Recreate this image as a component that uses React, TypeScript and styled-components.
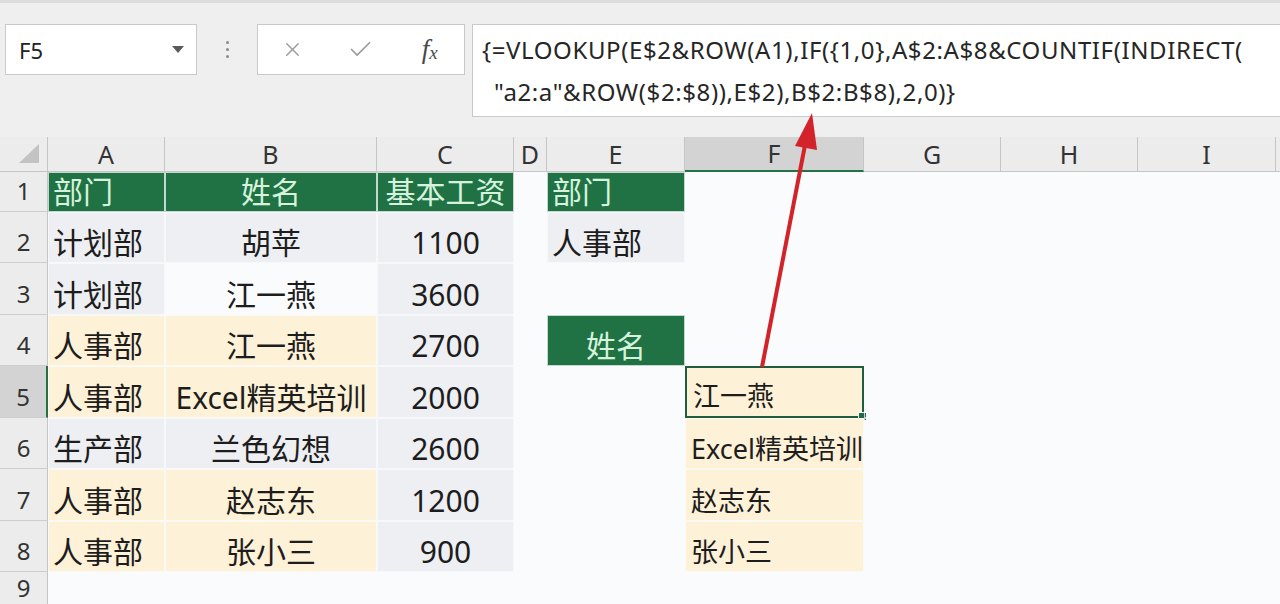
import React from 'react';
import styled, { createGlobalStyle } from 'styled-components';
import { X, Check } from 'lucide-react';

type Fill = 'green' | 'gray' | 'yellow' | 'none';

interface ICell {
  t: string;
  fill?: Fill;
  center?: boolean;
  small?: boolean;
  selected?: boolean;
}

interface IRow {
  n: number;
  cells: Record<string, ICell>;
}

const COLUMNS: { key: string; width: number }[] = [
  { key: 'A', width: 117 },
  { key: 'B', width: 212 },
  { key: 'C', width: 137 },
  { key: 'D', width: 33 },
  { key: 'E', width: 138 },
  { key: 'F', width: 179 },
  { key: 'G', width: 137 },
  { key: 'H', width: 137 },
  { key: 'I', width: 138 },
  { key: '', width: 60 },
];

const ROWS: IRow[] = [
  {
    n: 1,
    cells: {
      A: { t: '部门', fill: 'green' },
      B: { t: '姓名', fill: 'green', center: true },
      C: { t: '基本工资', fill: 'green', center: true },
      E: { t: '部门', fill: 'green' },
    },
  },
  {
    n: 2,
    cells: {
      A: { t: '计划部', fill: 'gray' },
      B: { t: '胡苹', fill: 'gray', center: true },
      C: { t: '1100', fill: 'gray', center: true },
      E: { t: '人事部', fill: 'gray' },
    },
  },
  {
    n: 3,
    cells: {
      A: { t: '计划部', fill: 'gray' },
      B: { t: '江一燕', center: true },
      C: { t: '3600', fill: 'gray', center: true },
    },
  },
  {
    n: 4,
    cells: {
      A: { t: '人事部', fill: 'yellow' },
      B: { t: '江一燕', fill: 'yellow', center: true },
      C: { t: '2700', fill: 'gray', center: true },
      E: { t: '姓名', fill: 'green', center: true },
    },
  },
  {
    n: 5,
    cells: {
      A: { t: '人事部', fill: 'yellow' },
      B: { t: 'Excel精英培训', fill: 'yellow', center: true },
      C: { t: '2000', fill: 'gray', center: true },
      F: { t: '江一燕', fill: 'yellow', small: true, selected: true },
    },
  },
  {
    n: 6,
    cells: {
      A: { t: '生产部', fill: 'gray' },
      B: { t: '兰色幻想', fill: 'gray', center: true },
      C: { t: '2600', fill: 'gray', center: true },
      F: { t: 'Excel精英培训', fill: 'yellow', small: true },
    },
  },
  {
    n: 7,
    cells: {
      A: { t: '人事部', fill: 'yellow' },
      B: { t: '赵志东', fill: 'yellow', center: true },
      C: { t: '1200', fill: 'gray', center: true },
      F: { t: '赵志东', fill: 'yellow', small: true },
    },
  },
  {
    n: 8,
    cells: {
      A: { t: '人事部', fill: 'yellow' },
      B: { t: '张小三', fill: 'yellow', center: true },
      C: { t: '900', fill: 'gray', center: true },
      F: { t: '张小三', fill: 'yellow', small: true },
    },
  },
  { n: 9, cells: {} },
];

const FILLS: Record<Fill, string> = {
  green: '#207245',
  gray: '#edeff2',
  yellow: '#fdf1d7',
  none: 'transparent',
};

const App = () => {
  return (
    <>
      <GlobalStyle />
      <Page>
        <Toolbar>
          <NameBox>
            F5
            <DropArrow viewBox="0 0 12 8">
              <polygon points="0,0 12,0 6,7" />
            </DropArrow>
          </NameBox>
          <Separator>
            <span />
            <span />
            <span />
          </Separator>
          <FuncBox>
            <FuncButton>
              <X size={23} strokeWidth={1.5} />
            </FuncButton>
            <FuncButton>
              <Check size={27} strokeWidth={1.5} />
            </FuncButton>
            <FuncButton>
              <Fx>
                f<sub>x</sub>
              </Fx>
            </FuncButton>
          </FuncBox>
          <FormulaBox>
            <FormulaLine>{'{=VLOOKUP(E$2&ROW(A1),IF({1,0},A$2:A$8&COUNTIF(INDIRECT('}</FormulaLine>
            <FormulaLine $indent>{'"a2:a"&ROW($2:$8)),E$2),B$2:B$8),2,0)}'}</FormulaLine>
          </FormulaBox>
        </Toolbar>

        <Sheet>
          <Corner>
            <svg width="22" height="20" viewBox="0 0 22 20">
              <polygon points="20,0 20,19 0,19" fill="#c3c3c3" />
            </svg>
          </Corner>
          {COLUMNS.map((c) => (
            <ColHead key={c.key || 'J'} $active={c.key === 'F'}>
              {c.key}
            </ColHead>
          ))}

          {ROWS.map((row) => (
            <React.Fragment key={row.n}>
              <RowHead $active={row.n === 5} $last={row.n === ROWS.length}>
                {row.n}
              </RowHead>
              {COLUMNS.map((c) => {
                const cell = row.cells[c.key];
                return (
                  <Cell
                    key={c.key || 'J'}
                    $fill={cell?.fill || 'none'}
                    $center={!!cell?.center}
                    $small={!!cell?.small}
                    $selected={!!cell?.selected}
                  >
                    {cell?.t}
                  </Cell>
                );
              })}
            </React.Fragment>
          ))}
        </Sheet>

        <Arrow width="1280" height="604" viewBox="0 0 1280 604">
          <line x1="762" y1="367" x2="806" y2="140" stroke="#d3232a" strokeWidth="4" />
          <polygon points="812,113 795,146 817,150" fill="#d3232a" />
        </Arrow>
      </Page>
    </>
  );
};

export default App;

const GlobalStyle = createGlobalStyle`
  html, body {
    margin: 0;
    padding: 0;
  }
  body {
    width: 1280px;
    height: 604px;
    overflow: hidden;
    background: #fafbfc;
    font-family: "Noto Sans", "Noto Sans CJK SC", sans-serif;
    color: #1d1d1d;
  }
`;

const Page = styled.div`
  position: relative;
  width: 1280px;
  height: 604px;
  overflow: hidden;
  display: flex;
  flex-direction: column;
`;

const Toolbar = styled.div`
  height: 137px;
  box-sizing: border-box;
  flex-shrink: 0;
  display: flex;
  align-items: flex-start;
  padding: 21px 0 0 5px;
  background: #efefef;
  border-top: 3px solid #dcdcdc;
`;

const NameBox = styled.div`
  width: 192px;
  height: 51px;
  box-sizing: border-box;
  display: flex;
  align-items: center;
  justify-content: space-between;
  padding: 0 12px 0 13px;
  background: #fff;
  border: 1px solid #c9c9c9;
  font-size: 22px;
  color: #222;
`;

const DropArrow = styled.svg`
  width: 12px;
  height: 8px;
  fill: #5a5a5a;
`;

const Separator = styled.div`
  width: 60px;
  height: 51px;
  display: flex;
  flex-direction: column;
  align-items: center;
  justify-content: center;
  gap: 4px;

  span {
    width: 3px;
    height: 3px;
    border-radius: 50%;
    background: #8a8a8a;
  }
`;

const FuncBox = styled.div`
  width: 208px;
  height: 51px;
  box-sizing: border-box;
  display: grid;
  grid-template-columns: repeat(3, 1fr);
  background: #fff;
  border: 1px solid #c9c9c9;
  color: #9c9c9c;
`;

const FuncButton = styled.div`
  display: flex;
  align-items: center;
  justify-content: center;
`;

const Fx = styled.span`
  font-family: "Liberation Serif", serif;
  font-style: italic;
  font-size: 27px;
  color: #4a4a4a;
  line-height: 1;

  sub {
    font-size: 19px;
    vertical-align: -1px;
  }
`;

const FormulaBox = styled.div`
  flex: 1;
  height: 93px;
  box-sizing: border-box;
  margin-left: 7px;
  margin-right: -2px;
  padding: 4px 9px 0;
  background: #fff;
  border: 1px solid #c9c9c9;
  font-size: 24px;
  letter-spacing: 0.6px;
  line-height: 42px;
  color: #262626;
  white-space: nowrap;
`;

const FormulaLine = styled.div<{ $indent?: boolean }>`
  padding-left: ${({ $indent }) => ($indent ? '12px' : '0')};
`;

const Sheet = styled.div`
  flex: 1;
  display: grid;
  grid-template-columns: 48px ${COLUMNS.map((c) => `${c.width}px`).join(' ')};
  grid-template-rows: 35px 40px repeat(7, 51.43px) 32px;
  background: #fafbfc;
`;

const Corner = styled.div`
  display: flex;
  align-items: flex-end;
  justify-content: flex-end;
  padding: 0 6px 7px 0;
  background: #ececec;
  border-right: 1px solid #c6c6c6;
  border-bottom: 1px solid #c6c6c6;
`;

const ColHead = styled.div<{ $active: boolean }>`
  display: flex;
  align-items: flex-end;
  justify-content: center;
  padding-bottom: 1px;
  box-sizing: border-box;
  font-size: 25px;
  line-height: 32px;
  color: #333;
  background: ${({ $active }) => ($active ? '#d3d3d3' : '#ececec')};
  border-right: 1px solid #c6c6c6;
  border-bottom: ${({ $active }) => ($active ? '2px solid #217346' : '1px solid #c6c6c6')};
`;

const RowHead = styled.div<{ $active: boolean; $last: boolean }>`
  display: flex;
  align-items: ${({ $last }) => ($last ? 'flex-start' : 'flex-end')};
  justify-content: center;
  padding-bottom: ${({ $last }) => ($last ? '0' : '4px')};
  box-sizing: border-box;
  font-size: 24px;
  line-height: 32px;
  color: #333;
  background: ${({ $active }) => ($active ? '#d3d3d3' : '#ececec')};
  border-right: ${({ $active }) => ($active ? '2px solid #217346' : '1px solid #c6c6c6')};
  border-bottom: ${({ $last }) => ($last ? 'none' : '1px solid #cdcdcd')};
`;

const Cell = styled.div<{ $fill: Fill; $center: boolean; $small: boolean; $selected: boolean }>`
  position: relative;
  display: flex;
  align-items: flex-end;
  justify-content: ${({ $center }) => ($center ? 'center' : 'flex-start')};
  box-sizing: border-box;
  padding: 0 ${({ $small }) => ($small ? '6px' : '5px')} 1px;
  font-size: ${({ $small }) => ($small ? '27px' : '30px')};
  line-height: 38px;
  white-space: nowrap;
  color: ${({ $fill }) => ($fill === 'green' ? '#d6f2dc' : '#1d1d1d')};
  background: ${({ $fill }) => FILLS[$fill]};
  box-shadow: inset 0 0 0 1px rgba(250, 251, 252, 0.75);
  ${({ $selected }) =>
    $selected &&
    `
    border: 2px solid #1d5e3c;
    box-shadow: none;
    &::after {
      content: '';
      position: absolute;
      right: -5px;
      bottom: -5px;
      width: 7px;
      height: 7px;
      background: #1f6b45;
      border: 1px solid #fafbfc;
    }
  `}
`;

const Arrow = styled.svg`
  position: absolute;
  left: 0;
  top: 0;
  pointer-events: none;
`;
